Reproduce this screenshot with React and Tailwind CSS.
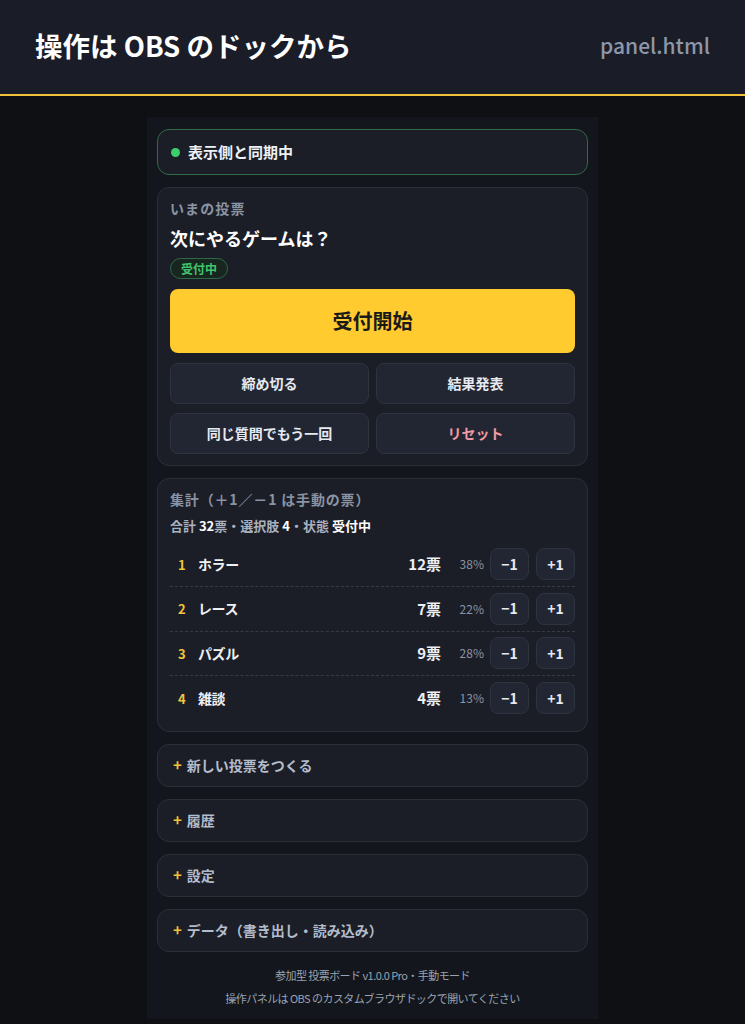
import { useState } from 'react';

const font = { fontFamily: '"Noto Sans CJK JP", "Noto Sans", sans-serif' };

const options = [
  { id: 1, name: 'ホラー', votes: 12, pct: 38 },
  { id: 2, name: 'レース', votes: 7, pct: 22 },
  { id: 3, name: 'パズル', votes: 9, pct: 28 },
  { id: 4, name: '雑談', votes: 4, pct: 13 },
];

const sections = ['新しい投票をつくる', '履歴', '設定', 'データ（書き出し・読み込み）'];

function Card({ children, className = '' }) {
  return (
    <div className={`rounded-xl border border-[#2a2f3a] bg-[#1b1e27] ${className}`}>
      {children}
    </div>
  );
}

function SmallButton({ children, className = '' }) {
  return (
    <button className={`flex items-center justify-center rounded-lg border border-[#2e3340] bg-[#222632] text-[14px] font-bold ${className}`}>
      {children}
    </button>
  );
}

export default function App() {
  const [rows] = useState(options);
  const total = rows.reduce((s, r) => s + r.votes, 0);

  return (
    <div className="min-h-[1024px] bg-[#0e1014]" style={font}>
      {/* top bar */}
      <header className="flex h-[96px] items-center justify-between border-b-2 border-[#f2c23a] bg-[#1a1d28] px-[35px] pb-[2px]">
        <h1 className="text-[27.5px] font-bold text-white">操作は OBS のドックから</h1>
        <span className="text-[21px] font-medium text-[#8d97aa]">panel.html</span>
      </header>

      <main className="mx-auto mt-[21px] flex w-[451px] flex-col gap-[12px] bg-[#13161c] px-[10px] pb-[12px] pt-[12px]">
        {/* sync status */}
        <div className="flex h-[46px] items-center gap-[8px] rounded-xl border border-[#2e6a47] bg-[#1b1e27] px-[13px]">
          <span className="h-[9px] w-[9px] rounded-full bg-[#3ccf6e]" />
          <span className="text-[15px] font-bold text-[#eef0f4]">表示側と同期中</span>
        </div>

        {/* current poll */}
        <Card className="px-[12px] pb-[11px] pt-[10px]">
          <div className="text-[14px] font-bold tracking-[0.08em] text-[#8a93a3]">いまの投票</div>
          <div className="mt-[6px] text-[18px] font-bold text-white">次にやるゲームは？</div>
          <div className="mt-[6px] inline-flex h-[21px] items-center rounded-full border border-[#2f6a46] bg-[#182620] px-[10px] text-[12px] font-bold text-[#41c46e]">
            受付中
          </div>
          <button className="mt-[10px] flex h-[64px] w-full items-center justify-center rounded-lg bg-[#ffcb2f] text-[20px] font-bold text-[#1a1a1a]">
            受付開始
          </button>
          <div className="mt-[10px] grid grid-cols-2 gap-x-[7px] gap-y-[9px]">
            <SmallButton className="h-[41px] text-[#e6e9ef]">締め切る</SmallButton>
            <SmallButton className="h-[41px] text-[#e6e9ef]">結果発表</SmallButton>
            <SmallButton className="h-[41px] text-[#e6e9ef]">同じ質問でもう一回</SmallButton>
            <SmallButton className="h-[41px] text-[#f29aa4]">リセット</SmallButton>
          </div>
        </Card>

        {/* tally */}
        <Card className="px-[12px] pb-[10px] pt-[10px]">
          <div className="text-[14px] font-bold tracking-[0.06em] text-[#8a93a3]">集計（＋1／－1 は手動の票）</div>
          <div className="mt-[6px] text-[13px] font-bold text-[#a9b1bf]">
            合計 <span className="text-white">{total}</span>票・選択肢 <span className="text-white">{rows.length}</span>・状態 <span className="text-white">受付中</span>
          </div>
          <div className="mt-[7px] flex flex-col">
            {rows.map((r, i) => (
              <div
                key={r.id}
                className={`flex h-[44.5px] items-center ${i < rows.length - 1 ? 'border-b border-dashed border-[#363b47]' : ''}`}
              >
                <span className="w-[28px] pl-[8px] text-[13px] font-bold text-[#f2c23a]">{r.id}</span>
                <span className="flex-1 text-[14px] font-bold tracking-[-0.03em] text-[#eef0f4]">{r.name}</span>
                <span className="text-[15px] font-bold text-[#eef0f4]">{r.votes}票</span>
                <span className="w-[43px] text-right text-[12px] text-[#8a93a3]">{r.pct}%</span>
                <SmallButton className="ml-[6px] h-[32px] w-[39px] text-[#e6e9ef]">−1</SmallButton>
                <SmallButton className="ml-[7px] h-[32px] w-[39px] text-[#e6e9ef]">+1</SmallButton>
              </div>
            ))}
          </div>
        </Card>

        {/* collapsible sections */}
        {sections.map((s) => (
          <Card key={s} className="flex h-[43px] items-center gap-[5px] px-[15px]">
            <span className="text-[15px] font-bold text-[#f2c23a]">+</span>
            <span className="text-[14px] font-bold text-[#b3bccb]">{s}</span>
          </Card>
        ))}

        <footer className="mt-[3px] flex flex-col items-center gap-[7px] text-[11px] tracking-[-0.05em] text-[#9aa3b2]">
          <div>参加型 投票ボード v1.0.0 Pro・手動モード</div>
          <div>操作パネルは OBS のカスタムブラウザドックで開いてください</div>
        </footer>
      </main>
    </div>
  );
}
